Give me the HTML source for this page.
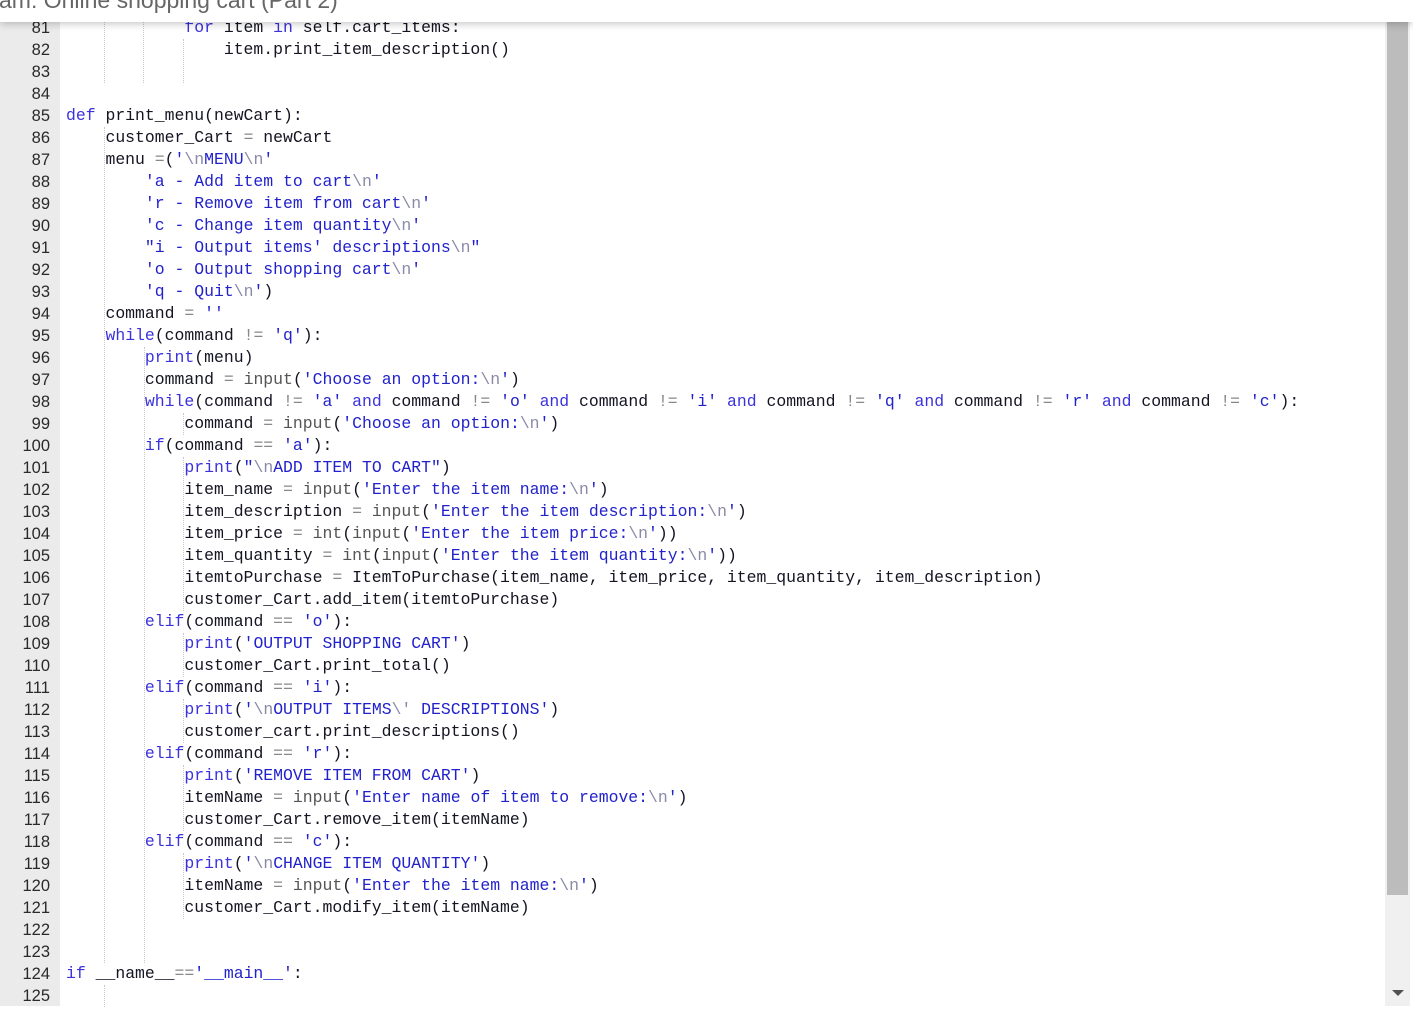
<!DOCTYPE html>
<html><head><meta charset="utf-8"><style>
body{margin:0;width:1413px;height:1018px;overflow:hidden;background:#fff;position:relative;font-family:"Liberation Mono",monospace;}
#gut{position:absolute;left:0;top:0;width:60px;height:1006px;background:#ebebeb;}
.ln{position:absolute;left:0;width:50px;text-align:right;font-size:16.5px;color:#2a2a2a;height:22px;line-height:22px;font-family:"Liberation Sans",sans-serif;}
.c{position:absolute;left:66px;height:22px;line-height:22px;font-size:16.45px;color:#141422;white-space:pre;}
.k{color:#3b32dc}.s{color:#2222cc}.e{color:#8a8aa8}.o{color:#888}.b{color:#555}
.g{position:absolute;width:0;border-left:1px dotted #c8c8c8;}
#hdr{position:absolute;left:0;top:0;width:1413px;height:22px;background:#fff;box-shadow:0 2px 8px rgba(0,0,0,.22);overflow:hidden;z-index:5}
#hdr span{position:absolute;left:-1px;top:-13px;font-family:"Liberation Sans",sans-serif;font-size:23px;color:#666;white-space:nowrap}
#track{position:absolute;left:1385px;top:22px;width:25px;height:984px;background:#f0f0f0}
#thumb{position:absolute;left:1387px;top:22px;width:21px;height:873px;background:#bcbcbc}
#arr{position:absolute;left:1392px;top:990px;width:0;height:0;border-left:6px solid transparent;border-right:6px solid transparent;border-top:6px solid #505050}
</style></head><body>
<div id="gut"></div>
<div id="hdr"><span>am: Online shopping cart (Part 2)</span></div>
<div id="track"></div><div id="thumb"></div><div id="arr"></div>
<div id="lines"></div>
<script>
var L={
81:'            <span class="k">for</span> item <span class="k">in</span> self.cart_items:',
82:'                item.print_item_description()',
83:'',84:'',
85:'<span class="k">def</span> print_menu(newCart):',
86:'    customer_Cart <span class="o">=</span> newCart',
87:'    menu <span class="o">=</span>(<span class="s">\'<span class="e">\\n</span>MENU<span class="e">\\n</span>\'</span>',
88:'        <span class="s">\'a - Add item to cart<span class="e">\\n</span>\'</span>',
89:'        <span class="s">\'r - Remove item from cart<span class="e">\\n</span>\'</span>',
90:'        <span class="s">\'c - Change item quantity<span class="e">\\n</span>\'</span>',
91:'        <span class="s">"i - Output items\' descriptions<span class="e">\\n</span>"</span>',
92:'        <span class="s">\'o - Output shopping cart<span class="e">\\n</span>\'</span>',
93:'        <span class="s">\'q - Quit<span class="e">\\n</span>\'</span>)',
94:'    command <span class="o">=</span> <span class="s">\'\'</span>',
95:'    <span class="k">while</span>(command <span class="o">!=</span> <span class="s">\'q\'</span>):',
96:'        <span class="k">print</span>(menu)',
97:'        command <span class="o">=</span> <span class="b">input</span>(<span class="s">\'Choose an option:<span class="e">\\n</span>\'</span>)',
98:'        <span class="k">while</span>(command <span class="o">!=</span> <span class="s">\'a\'</span> <span class="k">and</span> command <span class="o">!=</span> <span class="s">\'o\'</span> <span class="k">and</span> command <span class="o">!=</span> <span class="s">\'i\'</span> <span class="k">and</span> command <span class="o">!=</span> <span class="s">\'q\'</span> <span class="k">and</span> command <span class="o">!=</span> <span class="s">\'r\'</span> <span class="k">and</span> command <span class="o">!=</span> <span class="s">\'c\'</span>):',
99:'            command <span class="o">=</span> <span class="b">input</span>(<span class="s">\'Choose an option:<span class="e">\\n</span>\'</span>)',
100:'        <span class="k">if</span>(command <span class="o">==</span> <span class="s">\'a\'</span>):',
101:'            <span class="k">print</span>(<span class="s">"<span class="e">\\n</span>ADD ITEM TO CART"</span>)',
102:'            item_name <span class="o">=</span> <span class="b">input</span>(<span class="s">\'Enter the item name:<span class="e">\\n</span>\'</span>)',
103:'            item_description <span class="o">=</span> <span class="b">input</span>(<span class="s">\'Enter the item description:<span class="e">\\n</span>\'</span>)',
104:'            item_price <span class="o">=</span> <span class="b">int</span>(<span class="b">input</span>(<span class="s">\'Enter the item price:<span class="e">\\n</span>\'</span>))',
105:'            item_quantity <span class="o">=</span> <span class="b">int</span>(<span class="b">input</span>(<span class="s">\'Enter the item quantity:<span class="e">\\n</span>\'</span>))',
106:'            itemtoPurchase <span class="o">=</span> ItemToPurchase(item_name, item_price, item_quantity, item_description)',
107:'            customer_Cart.add_item(itemtoPurchase)',
108:'        <span class="k">elif</span>(command <span class="o">==</span> <span class="s">\'o\'</span>):',
109:'            <span class="k">print</span>(<span class="s">\'OUTPUT SHOPPING CART\'</span>)',
110:'            customer_Cart.print_total()',
111:'        <span class="k">elif</span>(command <span class="o">==</span> <span class="s">\'i\'</span>):',
112:'            <span class="k">print</span>(<span class="s">\'<span class="e">\\n</span>OUTPUT ITEMS<span class="e">\\\'</span> DESCRIPTIONS\'</span>)',
113:'            customer_cart.print_descriptions()',
114:'        <span class="k">elif</span>(command <span class="o">==</span> <span class="s">\'r\'</span>):',
115:'            <span class="k">print</span>(<span class="s">\'REMOVE ITEM FROM CART\'</span>)',
116:'            itemName <span class="o">=</span> <span class="b">input</span>(<span class="s">\'Enter name of item to remove:<span class="e">\\n</span>\'</span>)',
117:'            customer_Cart.remove_item(itemName)',
118:'        <span class="k">elif</span>(command <span class="o">==</span> <span class="s">\'c\'</span>):',
119:'            <span class="k">print</span>(<span class="s">\'<span class="e">\\n</span>CHANGE ITEM QUANTITY\'</span>)',
120:'            itemName <span class="o">=</span> <span class="b">input</span>(<span class="s">\'Enter the item name:<span class="e">\\n</span>\'</span>)',
121:'            customer_Cart.modify_item(itemName)',
122:'',123:'',
124:'<span class="k">if</span> __name__<span class="o">==</span><span class="s">\'__main__\'</span>:',
125:''};
var h='';
for(var n=81;n<=125;n++){var t=17+(n-81)*22;
h+='<div class="ln" style="top:'+t+'px">'+n+'</div><div class="c" style="top:'+t+'px">'+L[n]+'</div>';}
function g(x,a,b){return '<div class="g" style="left:'+x+'px;top:'+(17+(a-81)*22)+'px;height:'+((b-a+1)*22)+'px"></div>';}
h+=g(104,81,83)+g(143,81,83)+g(183,82,83);
h+=g(104,86,123)+g(104,125,125)+g(144,96,123);
h+=g(183,99,99)+g(183,101,107)+g(183,109,110)+g(183,112,113)+g(183,115,117)+g(183,119,121);
document.getElementById('lines').innerHTML=h;
</script>
</body></html>
